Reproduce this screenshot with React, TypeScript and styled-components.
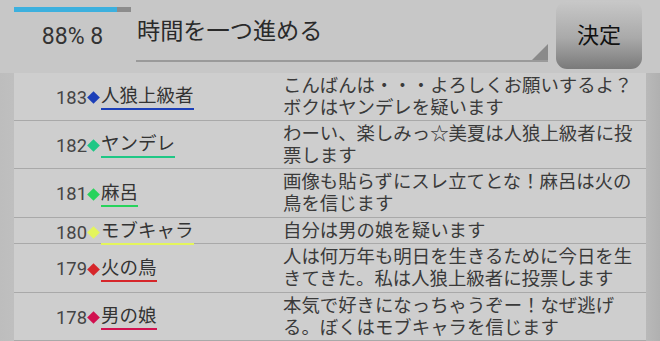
import React from 'react';
import styled, { createGlobalStyle } from 'styled-components';

const Global = createGlobalStyle`
  html, body { margin: 0; padding: 0; }
  body {
    width: 660px;
    height: 341px;
    overflow: hidden;
    background: #c6c6c6;
    font-family: Roboto, "Noto Sans CJK JP", sans-serif;
  }
`;

const Page = styled.div`
  width: 660px;
  height: 341px;
  display: flex;
  flex-direction: column;
  background: #c7c7c7;
`;

const Header = styled.div`
  display: flex;
  align-items: flex-start;
  height: 73px;
  box-sizing: border-box;
  padding: 0 18px 0 14px;
  flex-shrink: 0;
`;

const Status = styled.div`
  width: 117px;
  display: flex;
  flex-direction: column;
  align-items: center;
  padding-top: 7px;
`;

const Progress = styled.div`
  width: 100%;
  height: 5px;
  background: #8c8c8c;
  display: flex;
`;

const ProgressFill = styled.div`
  height: 100%;
  background: #3cb0de;
`;

const StatusText = styled.div`
  margin-top: 11px;
  font-size: 23px;
  line-height: 28px;
  color: #333;
`;

const InputBox = styled.div`
  margin-left: 5px;
  width: 412px;
  height: 62px;
  box-sizing: border-box;
  display: flex;
  align-items: flex-end;
  border-bottom: 2px solid #9a9a9a;
`;

const InputText = styled.div`
  flex: 1;
  font-size: 23.2px;
  line-height: 28px;
  color: #2a2a2a;
  padding: 0 0 15px 1px;
`;

const Corner = styled.svg`
  display: block;
  flex-shrink: 0;
`;

const Button = styled.button`
  margin: 1px 0 0 8px;
  width: 86px;
  height: 68px;
  border: none;
  border-radius: 11px;
  background: linear-gradient(#c8c8c8, #a9a9a9 55%, #7a7a7a);
  font-family: "Noto Sans CJK JP", sans-serif;
  font-size: 22px;
  color: #111;
  padding: 0 0 4px;
`;

const Body = styled.div`
  flex: 1;
  display: flex;
  background: linear-gradient(to right, #bdbdbd 0, #bfbfbf 2%, #c1c1c1 96%, #b0b0b0 100%);
`;

const List = styled.div`
  margin-left: 14px;
  width: 632px;
  background: #cecece;
  display: flex;
  flex-direction: column;
`;

const Row = styled.div<{ $h: number }>`
  display: grid;
  grid-template-columns: 269px 1fr;
  height: ${p => p.$h}px;
  box-sizing: border-box;
  border-bottom: 1px solid #a9a9a9;
`;

const Who = styled.div`
  display: flex;
  align-items: center;
  padding-left: 42px;
  padding-top: 2px;
`;

const Num = styled.span`
  font-size: 18.4px;
  color: #454545;
  line-height: 22px;
`;

const Diamond = styled.span<{ $c: string }>`
  display: inline-block;
  width: 9px;
  height: 9px;
  background: ${p => p.$c};
  transform: rotate(45deg);
  margin: 0 3px 0 2px;
`;

const Name = styled.span<{ $c: string }>`
  font-size: 18.5px;
  line-height: 22px;
  color: #333;
  border-bottom: 2px solid ${p => p.$c};
  padding-bottom: 1px;
`;

const Msg = styled.div`
  font-size: 18.4px;
  line-height: 22px;
  color: #3a3a3a;
  padding-top: 2px;
`;

const rows = [
  { n: 183, name: '人狼上級者', c: '#1c3fb8', msg: 'こんばんは・・・よろしくお願いするよ？ボクはヤンデレを疑います', h: 48 },
  { n: 182, name: 'ヤンデレ', c: '#1fc785', msg: 'わーい、楽しみっ☆美夏は人狼上級者に投票します', h: 48 },
  { n: 181, name: '麻呂', c: '#28d35c', msg: '画像も貼らずにスレ立てとな！麻呂は火の鳥を信じます', h: 49 },
  { n: 180, name: 'モブキャラ', c: '#e4f55c', msg: '自分は男の娘を疑います', h: 26 },
  { n: 179, name: '火の鳥', c: '#d6262a', msg: '人は何万年も明日を生きるために今日を生きてきた。私は人狼上級者に投票します', h: 49 },
  { n: 178, name: '男の娘', c: '#d1104f', msg: '本気で好きになっちゃうぞー！なぜ逃げる。ぼくはモブキャラを信じます', h: 48 },
];

export default function App() {
  const pct = 88;
  return (
    <Page>
      <Global />
      <Header>
        <Status>
          <Progress>
            <ProgressFill style={{ width: `${pct}%` }} />
          </Progress>
          <StatusText>88% 8</StatusText>
        </Status>
        <InputBox>
          <InputText>時間を一つ進める</InputText>
          <Corner width="16" height="16" viewBox="0 0 16 16">
            <polygon points="16,0 16,16 0,16" fill="#8a8a8a" />
          </Corner>
        </InputBox>
        <Button>決定</Button>
      </Header>
      <Body>
        <List>
          {rows.map(r => (
            <Row key={r.n} $h={r.h}>
              <Who>
                <Num>{r.n}</Num>
                <Diamond $c={r.c} />
                <Name $c={r.c}>{r.name}</Name>
              </Who>
              <Msg>{r.msg}</Msg>
            </Row>
          ))}
        </List>
      </Body>
    </Page>
  );
}
